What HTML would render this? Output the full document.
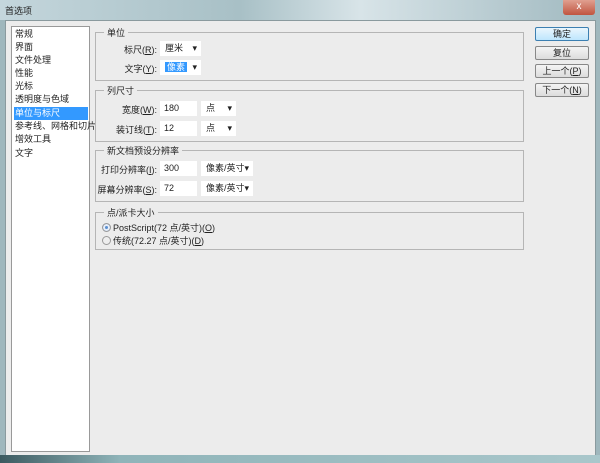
<html><head><style>
body{margin:0;width:600px;height:463px;overflow:hidden;font-family:"Liberation Sans","Noto Sans CJK SC",sans-serif;font-size:9px;color:#222;background:#9fb7bd;position:relative}
.a{position:absolute}
.title{left:0;top:0;width:600px;height:20px;background:linear-gradient(90deg,#c4d6dc,#a8c0c6 40%,#d8e4e8 60%,#9fb8bf);}
.body{left:5px;top:20px;width:589px;height:436px;background:#ececec;border:1px solid #8a9a9e}
.list{left:11px;top:26px;width:77px;height:424px;background:#fff;border:1px solid #999}
.it{position:absolute;left:2px;height:13px;line-height:13px;width:73px;padding-left:1px;white-space:nowrap}
.sel{background:#3399ff;color:#fff}
.grp{border:1px solid #b5b5b5;position:absolute;left:95px;width:427px}
.gl{position:absolute;left:8px;top:-7px;background:#ececec;padding:0 3px;white-space:nowrap}
.lbl{position:absolute;text-align:right;white-space:nowrap;left:0;width:61px}
.inp{position:absolute;background:#fff;height:15px;line-height:15px;padding-left:4px;box-sizing:border-box}
.dd{position:absolute;background:#fff;height:15px;line-height:15px;padding-left:5px;box-sizing:border-box;white-space:nowrap}
.dd:after{content:"▾";position:absolute;right:4px;top:0;font-size:9px}
.btn{position:absolute;left:535px;width:52px;height:12px;border:1px solid #888;border-radius:2px;background:linear-gradient(#f4f4f4,#dcdcdc);text-align:center;line-height:12px;font-size:9px;white-space:nowrap}
.tb{left:0;top:455px;width:600px;height:8px;background:linear-gradient(90deg,#3c5a60,#8fb4b9 20%,#a9c7cb)}
.rad{position:absolute;width:7px;height:7px;border-radius:50%;border:1px solid #999;background:#eee}
</style></head><body>
<div class="a title"><span style="position:absolute;left:5px;top:4px;font-size:9px">首选项</span>
<div style="position:absolute;left:563px;top:0;width:32px;height:15px;background:linear-gradient(#e0a090,#c05540);border-radius:0 0 3px 3px;color:#fff;text-align:center;font-size:10px;line-height:14px">x</div></div>
<div class="a body"></div>
<div class="a list">
<div class="it" style="top:1px">常规</div><div class="it" style="top:14px">界面</div><div class="it" style="top:27px">文件处理</div><div class="it" style="top:40px">性能</div><div class="it" style="top:53px">光标</div><div class="it" style="top:66px">透明度与色域</div><div class="it sel" style="top:80px">单位与标尺</div><div class="it" style="top:93px">参考线、网格和切片</div><div class="it" style="top:106px">增效工具</div><div class="it" style="top:120px">文字</div>
</div>
<div class="grp" style="top:32px;height:47px"><span class="gl">单位</span>
<span class="lbl" style="top:10px">标尺(<u>R</u>):</span><div class="dd" style="left:64px;top:8px;width:41px">厘米</div>
<span class="lbl" style="top:29px">文字(<u>Y</u>):</span><div class="dd" style="left:64px;top:27px;width:41px"><span style="background:#3399ff;color:#fff;padding:0 2px">像素</span></div>
</div>
<div class="grp" style="top:90px;height:50px"><span class="gl">列尺寸</span>
<span class="lbl" style="top:12px">宽度(<u>W</u>):</span><div class="inp" style="left:64px;top:10px;width:37px">180</div><div class="dd" style="left:105px;top:10px;width:35px">点</div>
<span class="lbl" style="top:32px">装订线(<u>T</u>):</span><div class="inp" style="left:64px;top:30px;width:37px">12</div><div class="dd" style="left:105px;top:30px;width:35px">点</div>
</div>
<div class="grp" style="top:150px;height:50px"><span class="gl">新文档预设分辨率</span>
<span class="lbl" style="top:12px">打印分辨率(<u>I</u>):</span><div class="inp" style="left:64px;top:10px;width:37px">300</div><div class="dd" style="left:105px;top:10px;width:52px">像素/英寸</div>
<span class="lbl" style="top:32px">屏幕分辨率(<u>S</u>):</span><div class="inp" style="left:64px;top:30px;width:37px">72</div><div class="dd" style="left:105px;top:30px;width:52px">像素/英寸</div>
</div>
<div class="grp" style="top:212px;height:36px"><span class="gl">点/派卡大小</span>
<div class="rad" style="left:6px;top:10px;background:#5a8fd0;box-shadow:inset 0 0 0 2px #e8eef8"></div><span style="position:absolute;left:17px;top:8px;white-space:nowrap">PostScript(72 点/英寸)(<u>O</u>)</span>
<div class="rad" style="left:6px;top:23px"></div><span style="position:absolute;left:17px;top:21px;white-space:nowrap">传统(72.27 点/英寸)(<u>D</u>)</span>
</div>
<div class="btn" style="top:27px;border-color:#3c7fb1;background:linear-gradient(#eaf6fd,#bee6fd)">确定</div>
<div class="btn" style="top:46px">复位</div>
<div class="btn" style="top:64px">上一个(<u>P</u>)</div>
<div class="btn" style="top:83px">下一个(<u>N</u>)</div>
<div class="a tb"></div>
</body></html>
